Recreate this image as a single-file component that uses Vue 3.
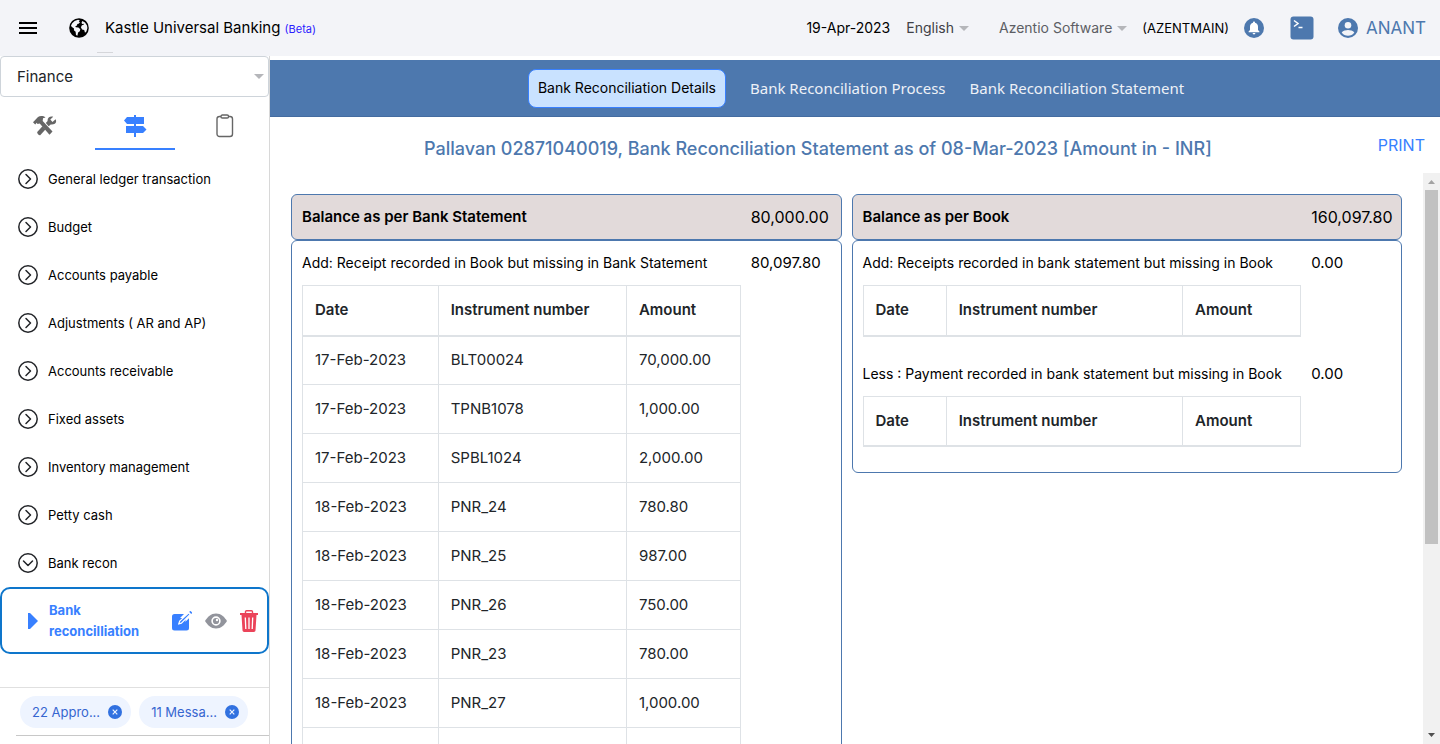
<script setup>
import { ref } from 'vue'

const menu = [
  'General ledger transaction',
  'Budget',
  'Accounts payable',
  'Adjustments ( AR and AP)',
  'Accounts receivable',
  'Fixed assets',
  'Inventory management',
  'Petty cash',
  'Bank recon',
]
const openItem = ref('Bank recon')

const pages = ['Bank Reconciliation Details', 'Bank Reconciliation Process', 'Bank Reconciliation Statement']
const activePage = ref(pages[0])

const chips = ['22 Appro...', '11 Messa...']

const panels = [
  {
    title: 'Balance as per Bank Statement',
    total: '80,000.00',
    kind: 'bank',
    sections: [
      {
        label: 'Add: Receipt recorded in Book but missing in Bank Statement',
        amount: '80,097.80',
        rows: [
          ['17-Feb-2023', 'BLT00024', '70,000.00'],
          ['17-Feb-2023', 'TPNB1078', '1,000.00'],
          ['17-Feb-2023', 'SPBL1024', '2,000.00'],
          ['18-Feb-2023', 'PNR_24', '780.80'],
          ['18-Feb-2023', 'PNR_25', '987.00'],
          ['18-Feb-2023', 'PNR_26', '750.00'],
          ['18-Feb-2023', 'PNR_23', '780.00'],
          ['18-Feb-2023', 'PNR_27', '1,000.00'],
          ['', '', ''],
        ],
      },
    ],
  },
  {
    title: 'Balance as per Book',
    total: '160,097.80',
    kind: 'book',
    sections: [
      { label: 'Add: Receipts recorded in bank statement but missing in Book', amount: '0.00', rows: [] },
      { label: 'Less : Payment recorded in bank statement but missing in Book', amount: '0.00', rows: [] },
    ],
  },
]
</script>

<template>
  <div class="shell">
    <header class="topbar">
      <button class="icon-btn burger" aria-label="Menu">
        <svg width="18" height="12" viewBox="0 0 18 12"><path d="M0 1h18M0 6h18M0 11h18" stroke="#000" stroke-width="2" /></svg>
      </button>
      <svg class="globe" width="20" height="20" viewBox="0 0 20 20">
        <circle cx="10" cy="10" r="9.8" fill="#000" />
        <path fill="#f3f4f8" d="M3.2 5.2 5.600 2.900 9 1.700 10.800 2.300 9.800 3.600 11 4.300 9.600 5.800 8.300 6 8 7.500 6.300 8.200 6.900 9.200 9.400 9.500 11.300 11.300 10.800 13.300 9.100 14.600 8.400 17.700 7 17 6.600 13.800 4.900 12.200 5 10.500 2.600 8.700 2 7.500Z" />
        <path fill="#f3f4f8" d="M13.300 3 16 4.500 18 7.500 18.400 10 17.400 13.500 16 14.700 15.200 12 13.100 11.400 11.900 9.300 12.900 7.200 14.800 6.800 14.600 5.700 13 5.900 12.600 4.600Z" />
      </svg>
      <span class="brand">Kastle Universal Banking <small>(Beta)</small></span>
      <div class="tools">
        <span class="date">19-Apr-2023</span>
        <button class="drop">English <i class="caret"></i></button>
        <button class="drop org">Azentio Software <i class="caret"></i></button>
        <span class="tenant">(AZENTMAIN)</span>
        <button class="icon-btn bell" aria-label="Notifications">
          <svg width="20" height="20" viewBox="0 0 20 20">
            <circle cx="10" cy="10" r="10" fill="#4d78ae" />
            <path fill="#fff" d="M10 3.400c.6 0 1 .4 1 1v.4c1.900.5 3 2 3 4v3.300l1.400 1.500v.7H4.600v-.7L6 12.100V8.800c0-2 1.100-3.500 3-4v-.4c0-.6.4-1 1-1ZM8.600 15h2.800a1.400 1.400 0 0 1-2.800 0Z" />
          </svg>
        </button>
        <button class="icon-btn term" aria-label="Console">
          <svg width="24" height="24" viewBox="0 0 24 24">
            <rect x=".5" y=".5" width="23" height="23" rx="3" fill="#4d78ae" />
            <path d="m4 4.500 4 3-4 3M8.500 11.500h4" fill="none" stroke="#fff" stroke-width="1.500" />
          </svg>
        </button>
        <button class="user">
          <svg width="20" height="20" viewBox="0 0 20 20">
            <circle cx="10" cy="10" r="10" fill="#4d78ae" />
            <circle cx="10" cy="7.200" r="3.300" fill="#f3f4f8" />
            <path d="M3.700 14.500C5 12.700 8 12 10 12s5 .7 6.300 2.500C14.900 16.600 12.500 17.800 10 17.800S5.100 16.600 3.700 14.500Z" fill="#f3f4f8" />
          </svg>
          ANANT
        </button>
      </div>
    </header>

    <div class="body">
      <aside class="side">
        <button class="module">Finance <i class="caret"></i></button>
        <div class="tabs">
          <button class="tab" aria-label="Tools">
            <svg width="24" height="20" viewBox="0 0 24 20" fill="#666">
              <path d="M0 6.300 5 1C7-.3 10.500-.2 12.500 1.500L10 2.300 9.700 5l9.800 10.500-3 3.200L6.700 7.500 4.500 8 3.800 6.800 2.200 8.500Z" />
              <path d="M22.600 3.300 19.500 6 17.300 3.600 20.200.8C17.200-.3 14.200 1.800 14.600 5L12.800 7l2.900 3.200 2-1.700c3.600.5 6.700-1.700 4.900-5.200ZM9.500 10.300 4.200 16c-.4 1 1.800 3.800 3 3.200l5.200-5.700Z" />
            </svg>
          </button>
          <button class="tab on" aria-label="Transactions">
            <svg width="24" height="22" viewBox="0 0 24 22" fill="#3880ff">
              <path d="M11 0h2v22h-2zM4 2h17v7H4L1 5.500ZM3 11h17l3.500 3.500L20 18H3Z" />
            </svg>
          </button>
          <button class="tab" aria-label="Reports">
            <svg width="18" height="24" viewBox="0 0 18 24" fill="none" stroke="#666" stroke-width="1.400">
              <rect x="1" y="2.500" width="15.500" height="20" rx="2.500" />
              <rect x="5" y="1" width="7.500" height="3" rx="1.300" fill="#fff" />
            </svg>
          </button>
        </div>
        <nav class="menu">
          <button v-for="m in menu" :key="m" class="item" @click="openItem = m">
            <svg width="20" height="20" viewBox="0 0 20 20" fill="none" stroke="#222428" stroke-width="1.500">
              <circle cx="10" cy="10" r="9.200" />
              <path v-if="m === openItem" d="m5.500 8 4.500 4.500L14.500 8" stroke-linecap="round" stroke-linejoin="round" />
              <path v-else d="m8 5.500 4.500 4.500L8 14.500" stroke-linecap="round" stroke-linejoin="round" />
            </svg>
            {{ m }}
          </button>
          <div class="picked">
            <svg class="play" width="10" height="16" viewBox="0 0 10 16"><path d="M0 0h2l8 8-8 8H0Z" fill="#3880ff" /></svg>
            <a href="#" class="picked-name">Bank reconcilliation</a>
            <button class="icon-btn" aria-label="Edit">
              <svg width="20" height="20" viewBox="0 0 20 20">
                <path d="M2.500 3H12L6.500 8.500V13H11l6-5.800V17a2.500 2.500 0 0 1-2.500 2.500h-12A2.500 2.500 0 0 1 0 17V5.500A2.500 2.500 0 0 1 2.500 3Z" fill="#3880ff" />
                <path d="M5.500 7h8v6h-8z" fill="#3880ff" />
                <path d="m6.800 12.800.9-2.700 9-8.200 1.500 1.600-8.800 8.600Z" fill="#3880ff" stroke="#fff" stroke-width="1.200" />
                <path d="m18.300.9 1 1" stroke="#3880ff" stroke-width="1.600" stroke-linecap="round" />
              </svg>
            </button>
            <button class="icon-btn" aria-label="View">
              <svg width="22" height="16" viewBox="0 0 22 16">
                <path d="M11 .5C16 .5 19.500 4 22 8c-2.500 4-6 7.500-11 7.500S2.500 12 0 8C2.500 4 6 .5 11 .5Z" fill="#92949c" />
                <circle cx="11" cy="8" r="3.900" fill="#92949c" stroke="#fff" stroke-width="1.600" />
                <circle cx="12" cy="7" r="1.200" fill="#fff" />
              </svg>
            </button>
            <button class="icon-btn" aria-label="Delete">
              <svg width="18" height="22" viewBox="0 0 18 22">
                <path d="M0 3h18v2H0zM1.500 5h15l-1 15.500a1.600 1.600 0 0 1-1.600 1.500H4.100a1.600 1.600 0 0 1-1.600-1.500Z" fill="#eb445a" />
                <path d="M5.500 3V1.700C5.500 1 6 .7 6.500.7h5c.5 0 1 .3 1 1V3" fill="none" stroke="#eb445a" stroke-width="1.400" />
                <path d="m5.300 7.500.5 11.500M9 7.500V19M12.700 7.500 12.200 19" stroke="#fff" stroke-width="1.300" />
              </svg>
            </button>
          </div>
        </nav>
        <footer class="chips">
          <div class="chip-row">
            <span v-for="c in chips" :key="c" class="chip">
              {{ c }}
              <button class="icon-btn" aria-label="Dismiss">
                <svg width="14" height="14" viewBox="0 0 14 14"><circle cx="7" cy="7" r="7" fill="#3171e0" /><path d="m4.700 4.700 4.600 4.600m0-4.600L4.700 9.300" stroke="#eef4ff" stroke-width="1.200" /></svg>
              </button>
            </span>
          </div>
        </footer>
      </aside>

      <main class="main">
        <nav class="pages">
          <button v-for="p in pages" :key="p" class="page" :class="{ active: p === activePage }" @click="activePage = p">{{ p }}</button>
        </nav>
        <div class="title-row">
          <h1>Pallavan 02871040019, Bank Reconciliation Statement as of 08-Mar-2023 [Amount in - INR]</h1>
          <button class="print">PRINT</button>
        </div>
        <div class="viewport">
          <div class="panels">
            <section v-for="p in panels" :key="p.kind" class="panel">
              <div class="panel-head split"><strong>{{ p.title }}</strong><span>{{ p.total }}</span></div>
              <div class="panel-body">
                <div v-for="s in p.sections" :key="s.label" class="split entry">
                  <div>
                    <p class="label">{{ s.label }}</p>
                    <table :class="p.kind">
                      <thead><tr><th>Date</th><th>Instrument number</th><th>Amount</th></tr></thead>
                      <tbody v-if="s.rows.length">
                        <tr v-for="(r, i) in s.rows" :key="i"><td v-for="(v, j) in r" :key="j">{{ v }}</td></tr>
                      </tbody>
                    </table>
                  </div>
                  <span>{{ s.amount }}</span>
                </div>
              </div>
            </section>
          </div>
          <div class="track" aria-hidden="true">
            <svg width="17" height="17" viewBox="0 0 17 17"><path d="M5 11h7L8.500 7Z" fill="#a3a3a3" /></svg>
            <div class="thumb-area"><div class="thumb"></div></div>
            <svg width="17" height="17" viewBox="0 0 17 17"><path d="M5 6h7l-3.500 4Z" fill="#505050" /></svg>
          </div>
        </div>
      </main>
    </div>
  </div>
</template>

<style>
body { margin: 0; background: #fff; }
</style>

<style scoped>
.shell, .shell * { box-sizing: border-box; }
.shell {
  display: flex;
  flex-direction: column;
  height: 100vh;
  overflow: hidden;
  font: 16px/24px Inter, "Liberation Sans", sans-serif;
  color: #000;
}
button { font: inherit; color: inherit; background: none; border: 0; padding: 0; cursor: pointer; }
svg { display: block; flex: none; }
.icon-btn { display: flex; flex: none; }

.topbar { display: flex; align-items: center; flex: none; height: 56px; padding: 0 14px 0 19px; background: #f3f4f8; white-space: nowrap; }
.globe { margin-left: 32px; }
.brand { position: relative; margin-left: 16px; font-size: 15px; }
.brand::after { content: ""; position: absolute; left: -8px; bottom: -12px; width: 16px; height: 1px; background: #d5d6da; }
.brand small { font-size: 11px; color: #2b20ff; }
.tools { display: flex; align-items: center; margin-left: auto; font-size: 14px; }
.drop { display: flex; align-items: center; gap: 5px; margin-left: 16px; color: #3f4147; }
.drop.org { margin-left: 30px; color: #5c5e64; }
.caret { width: 0; height: 0; border: 5px solid transparent; border-top-color: #b5b6ba; border-bottom: 0; }
.tenant { margin-left: 15px; font-size: 13px; }
.bell { margin-left: 15px; }
.term { margin-left: 26px; }
.user { display: flex; align-items: center; gap: 8px; margin-left: 24px; font-size: 17px; color: #4d78ae; }

.body { display: flex; flex: 1; min-height: 0; }
.side { display: flex; flex-direction: column; flex: none; width: 270px; border-right: 1px solid #d8d8d8; }
.module { display: flex; align-items: center; justify-content: space-between; flex: none; height: 41px; padding: 0 4px 0 16px; border: 1px solid #ced4da; border-radius: 4px; color: #222428; font-size: 15px; }
.tabs { display: grid; grid-template-columns: repeat(3, 80px); gap: 10px; padding-left: 5px; height: 53px; flex: none; }
.tab { display: flex; align-items: center; justify-content: center; padding-top: 6px; border-bottom: 2px solid transparent; }
.tab.on { border-color: #3880ff; }
.menu { flex: 1; padding-top: 5px; min-height: 0; }
.item { display: flex; align-items: center; gap: 10px; width: 100%; height: 48px; padding-left: 18px; font-size: 13px; text-align: left; }
.picked { display: flex; align-items: center; height: 67px; padding: 0 9px 0 26px; border: 2px solid #0e76cb; border-radius: 10px; gap: 13px; }
.picked-name { flex: 1; margin-right: 10px; margin-left: -2px; font-size: 13px; line-height: 21px; font-weight: 700; color: #3880ff; text-decoration: none; }
.chips { flex: none; height: 57px; border-top: 1px solid #e0e0e0; padding: 0 0 8px 16px; }
.chip-row { display: flex; align-items: center; gap: 8px; height: 48px; padding-left: 4px; border-bottom: 1px solid #c8c8c8; }
.chip { display: flex; align-items: center; gap: 8px; height: 32px; padding: 0 9px 0 12px; border-radius: 16px; background: #eef4ff; color: #3666d0; font-size: 13px; }

.main { display: flex; flex-direction: column; flex: 1; min-width: 0; padding-top: 4px; }
.pages { display: flex; align-items: center; justify-content: center; gap: 8px; flex: none; height: 57px; padding-left: 10px; background: #4d78ae; border-bottom: 1px solid #446ca0; }
.page { height: 39px; padding: 0 7px; font-family: "Noto Sans", sans-serif; font-size: 15px; color: #edf1f7; border: 1px solid transparent; border-radius: 8px; }
.page.active { background: #c9e2ff; color: #000; border-color: #3880ff; font-family: Inter, sans-serif; font-size: 14px; margin-right: 8px; padding: 0 9px; }
.title-row { display: flex; align-items: center; flex: none; height: 56px; padding: 0 15px 0 20px; color: #4d78ae; }
h1 { flex: 1; margin: 0; padding: 8px 32px 0 0; font-size: 18px; font-weight: 500; text-align: center; }
.print { color: #3880ff; }
.viewport { display: flex; flex: 1; min-height: 0; }
.panels { flex: 1; display: grid; grid-template-columns: 1fr 1fr; align-items: start; gap: 10px; padding: 21px; overflow: hidden; min-width: 0; }
.panel-head, .panel-body { border: 1px solid #4d78ae; border-radius: 6px; padding: 10px; }
.panel-head { background: #e2dada; }
.panel-head strong { font-size: 15px; font-weight: 600; }
.panel-body { padding-bottom: 0; font-size: 15px; }
.split { display: grid; grid-template-columns: minmax(0, 11fr) minmax(0, 2fr); gap: 10px; }
.entry { padding-bottom: 25px; }
.label { margin: 0 0 10px; font-size: 14px; white-space: nowrap; }
table { width: 100%; border-collapse: collapse; table-layout: fixed; color: #212529; }
th, td { height: 49px; padding: 0 12px; border: 1px solid #dee2e6; text-align: left; }
th { height: 50px; border-bottom-width: 2px; font-weight: 600; }
.bank th:nth-child(1) { width: 31%; }
.bank th:nth-child(2) { width: 43%; }
.book th:nth-child(1) { width: 19%; }
.book th:nth-child(2) { width: 54%; }
.track { display: flex; flex-direction: column; flex: none; width: 17px; background: #f1f1f1; }
.thumb-area { flex: 1; padding: 0 2px; }
.thumb { height: 66%; background: #c1c1c1; }
</style>
